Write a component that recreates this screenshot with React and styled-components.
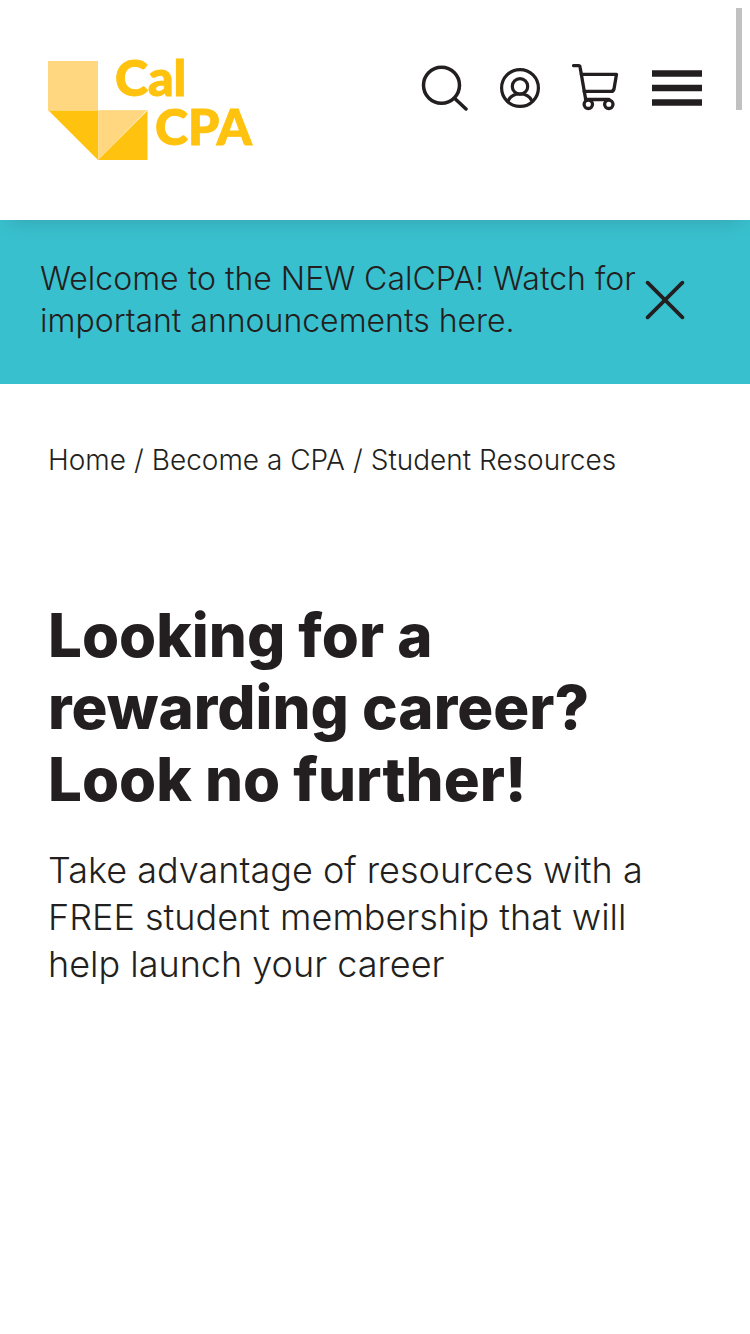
import React, { useState } from "react";
import styled, { createGlobalStyle } from "styled-components";

const ink = "#231f20";
const yellow = "#ffc20e";
const paleYellow = "#ffd780";

const GlobalStyle = createGlobalStyle`
  * { box-sizing: border-box; }
  body {
    margin: 0;
    background: #fff;
    color: ${ink};
    font-family: Inter, "Liberation Sans", sans-serif;
    font-weight: 300;
  }
`;

const Header = styled.header`
  position: relative;
  display: flex;
  justify-content: space-between;
  align-items: flex-start;
  padding: 40px 48px;
  background: #fff;
  box-shadow: 0 10px 20px -10px rgba(35, 31, 32, 0.2);
`;

const LogoLink = styled.a`
  display: block;
  height: 140px;

  svg { display: block; }
  text {
    font-family: Lato, sans-serif;
    font-weight: 900;
    font-size: 50px;
    fill: ${yellow};
    stroke: ${yellow};
    stroke-width: 1px;
  }
`;

const Tools = styled.nav`
  display: flex;
  align-items: center;
  gap: 32px;
  height: 96px;
`;

const IconButton = styled.button`
  display: flex;
  flex: none;
  padding: 0;
  border: 0;
  background: none;
  color: inherit;
  cursor: pointer;

  svg {
    display: block;
    fill: none;
    stroke: currentColor;
    stroke-linecap: round;
    stroke-linejoin: round;
  }
`;

const Banner = styled.section`
  display: flex;
  align-items: center;
  justify-content: space-between;
  gap: 8px;
  padding: 38px 65px 42px 40px;
  background: #39c0cf;
`;

const BannerText = styled.p`
  margin: 0;
  font-size: 32px;
  line-height: 42px;
`;

const Main = styled.main`
  padding: 56px 48px;
`;

const Crumbs = styled.ol`
  display: flex;
  flex-wrap: wrap;
  margin: 0 0 119px;
  padding: 0;
  list-style: none;
  font-size: 28px;
  line-height: 40px;

  li + li::before {
    content: "/";
    margin: 0 8px;
  }
  a {
    color: inherit;
    text-decoration: none;
  }
`;

const Title = styled.h1`
  max-width: 600px;
  margin: 0 0 32px;
  font-size: 60px;
  font-weight: 800;
  line-height: 72px;
`;

const Lead = styled.p`
  max-width: 640px;
  margin: 0;
  font-size: 36px;
  line-height: 47px;
`;

const ScrollThumb = styled.div`
  position: fixed;
  top: 8px;
  right: 8px;
  width: 6px;
  height: 102px;
  background: #c1c1c1;
`;

function Logo() {
  return (
    <svg width="220" height="140" viewBox="0 -20 220 140" role="img" aria-label="CalCPA">
      <path d="M0 1h50v50H0z" fill={paleYellow} />
      <path d="M0 50h50v50z" fill={yellow} />
      <path d="M50 50h49L50 100z" fill={paleYellow} />
      <path d="M99.500 50.500V100H50z" fill={yellow} />
      <path d="M0 50.500h99.500M50.500 50V99" stroke="#ffe09a" strokeWidth="1" opacity=".7" />
      <text x="67" y="36">Cal</text>
      <text x="107" y="85">CPA</text>
    </svg>
  );
}

function SearchIcon() {
  return (
    <svg width="48" height="48" viewBox="0 0 48 48" strokeWidth="3.500">
      <circle cx="21.500" cy="21.300" r="18" />
      <path d="M34.500 34.300L46 45" />
    </svg>
  );
}

function UserIcon() {
  return (
    <svg width="40" height="40" viewBox="0 0 40 40" strokeWidth="3.200">
      <circle cx="20" cy="20" r="18.400" />
      <circle cx="20" cy="18.400" r="7.700" />
      <path d="M8.300 32.500c1.900-4 6.300-6.500 11.700-6.500s9.800 2.500 11.700 6.500" />
    </svg>
  );
}

function CartIcon() {
  return (
    <svg width="48" height="48" viewBox="0 0 48 48" strokeWidth="3.300">
      <path d="M1.600 1.700H6.500C7.500 1.700 8 2.300 8.100 3.200L13.600 35" />
      <path d="M9.300 10.300H44.500L42 25C41.600 26.700 40.700 27.400 39 27.400H12.200" />
      <path d="M13.600 35.500H37" />
      <circle cx="16.300" cy="40.300" r="4.200" />
      <circle cx="36.800" cy="40.300" r="4.200" />
    </svg>
  );
}

const MenuBars = styled.path`
  stroke-linecap: butt;
`;

function MenuIcon() {
  return (
    <svg width="50" height="36" viewBox="0 0 50 36" strokeWidth="6.500">
      <MenuBars d="M0 3.500h50M0 18h50M0 32.500h50" />
    </svg>
  );
}

function CloseIcon() {
  return (
    <svg width="40" height="40" viewBox="0 0 40 40" strokeWidth="3.700">
      <path d="M2.600 2.600l34.800 34.800M37.400 2.600L2.600 37.400" />
    </svg>
  );
}

export default function App() {
  const [bannerOpen, setBannerOpen] = useState(true);
  return (
    <>
      <GlobalStyle />
      <Header>
        <LogoLink href="#"><Logo /></LogoLink>
        <Tools aria-label="Site tools">
          <IconButton aria-label="Search"><SearchIcon /></IconButton>
          <IconButton aria-label="Account"><UserIcon /></IconButton>
          <IconButton aria-label="Cart"><CartIcon /></IconButton>
          <IconButton aria-label="Menu"><MenuIcon /></IconButton>
        </Tools>
      </Header>
      {bannerOpen && (
        <Banner>
          <BannerText>Welcome to the NEW CalCPA! Watch for important announcements here.</BannerText>
          <IconButton aria-label="Close" onClick={() => setBannerOpen(false)}><CloseIcon /></IconButton>
        </Banner>
      )}
      <Main>
        <Crumbs>
          <li><a href="#">Home</a></li>
          <li><a href="#">Become a CPA</a></li>
          <li><a href="#">Student Resources</a></li>
        </Crumbs>
        <Title>Looking for a rewarding career? Look no further!</Title>
        <Lead>
          Take advantage of resources with a FREE student membership that will help launch your career
        </Lead>
      </Main>
      <ScrollThumb />
    </>
  );
}
